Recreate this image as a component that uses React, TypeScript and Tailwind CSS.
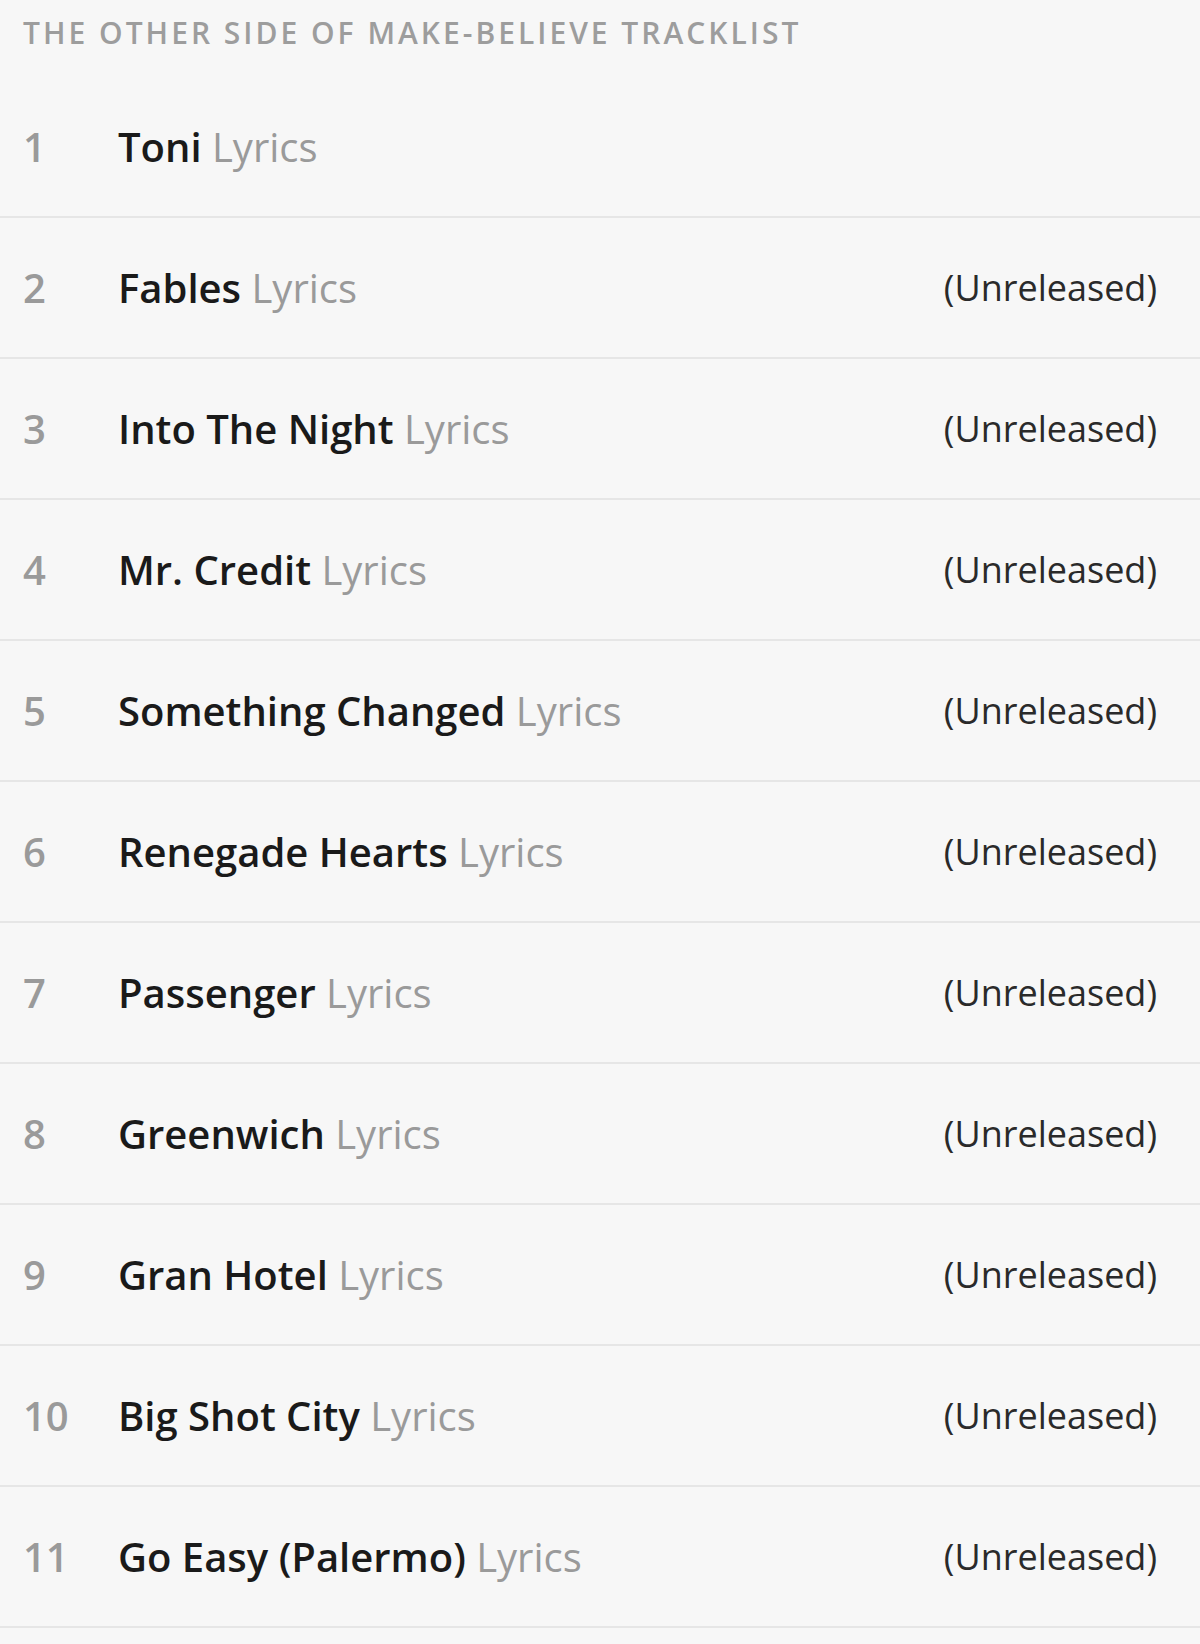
import React from "react";

const tracks = [
  { n: 1, title: "Toni", unreleased: false },
  { n: 2, title: "Fables", unreleased: true },
  { n: 3, title: "Into The Night", unreleased: true },
  { n: 4, title: "Mr. Credit", unreleased: true },
  { n: 5, title: "Something Changed", unreleased: true },
  { n: 6, title: "Renegade Hearts", unreleased: true },
  { n: 7, title: "Passenger", unreleased: true },
  { n: 8, title: "Greenwich", unreleased: true },
  { n: 9, title: "Gran Hotel", unreleased: true },
  { n: 10, title: "Big Shot City", unreleased: true },
  { n: 11, title: "Go Easy (Palermo)", unreleased: true },
];

export default function App() {
  return (
    <div
      className="w-[1200px] min-h-[1644px] bg-[#f7f7f7]"
      style={{ fontFamily: '"Open Sans", "Noto Sans", sans-serif' }}
    >
      <div className="h-[77px] pl-[23px] pt-[15px] text-[30px] leading-[36px] font-semibold tracking-[0.1em] text-[#9d9d9d] whitespace-nowrap">
        THE OTHER SIDE OF MAKE-BELIEVE TRACKLIST
      </div>
      {tracks.map((t) => (
        <div
          key={t.n}
          className="h-[141px] flex items-center border-b-2 border-[#e6e6e6] pl-[23px] pr-[43px]"
        >
          <div className="w-[95px] shrink-0 text-[40px] font-semibold text-[#9a9a9a]">
            {t.n}
          </div>
          <div className="flex-1 text-[40px]">
            <span className="font-semibold text-[#1a1a1a]">{t.title}</span>{" "}
            <span className="text-[#9a9a9a]">Lyrics</span>
          </div>
          {t.unreleased && (
            <div className="text-[36px] text-[#2a2a2a]">(Unreleased)</div>
          )}
        </div>
      ))}
    </div>
  );
}
